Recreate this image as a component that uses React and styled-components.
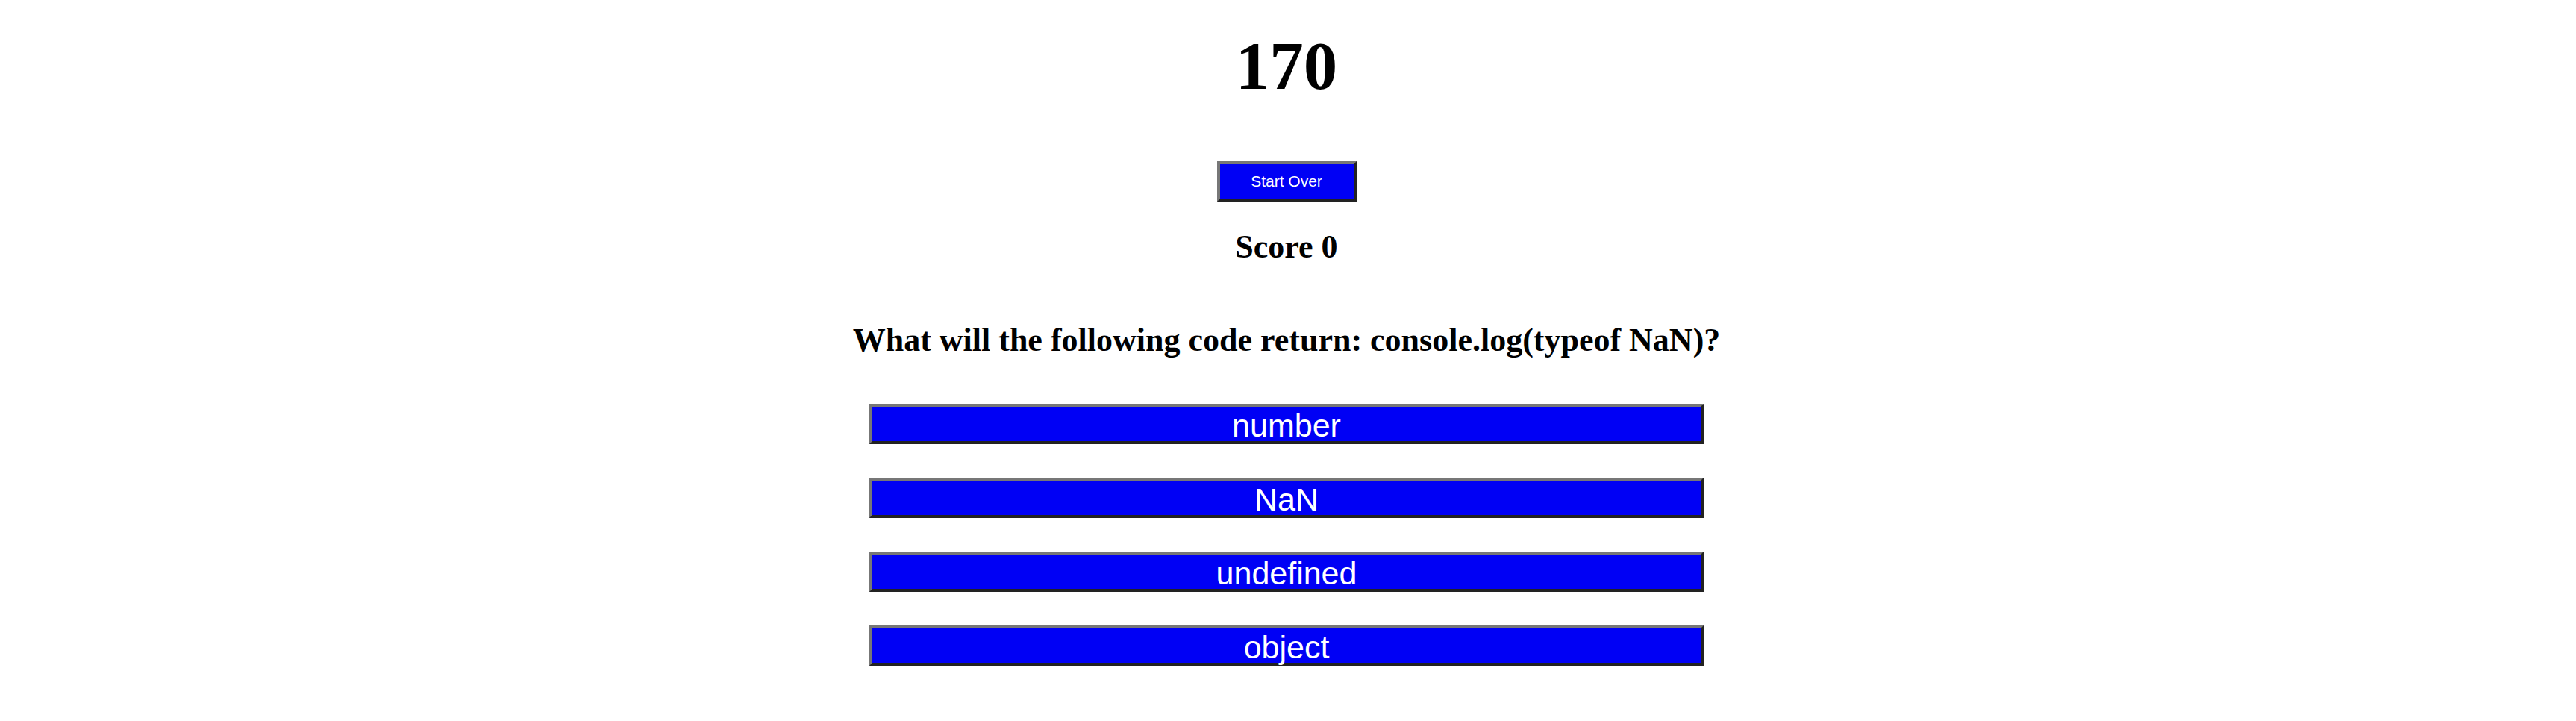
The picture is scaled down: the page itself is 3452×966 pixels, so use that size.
import React from "react";
import styled, { createGlobalStyle } from "styled-components";

const answers = ["number", "NaN", "undefined", "object"];

const App = () => {
    return <Page>
        <Global />
        <Timer>170</Timer>
        <StartButton>Start Over</StartButton>
        <Score>Score 0</Score>
        <Question>What will the following code return: console.log(typeof NaN)?</Question>
        <Answers>
            {answers.map((a) => (
                <AnswerButton key={a}>{a}</AnswerButton>
            ))}
        </Answers>
    </Page>
}

export default App

const Global = createGlobalStyle`
body{
    margin: 0;
    background: #ffffff;
    font-family: "Liberation Serif", "Times New Roman", serif;
    color: #000;
}
`

const Page = styled.div`
box-sizing: border-box;
display: flex;
flex-direction: column;
align-items: center;
width: 100%;
padding-right: 4px;
`

const Timer = styled.h1`
margin: 39px 0 0 0;
font-size: 91px;
line-height: 100px;
font-weight: bold;
`

const Bevel = styled.button`
box-sizing: border-box;
display: flex;
align-items: center;
justify-content: center;
background-color: #0000f5;
color: #ffffff;
font-family: "Liberation Sans", Arial, sans-serif;
border-style: solid;
border-width: 4px;
border-color: #777777 #222222 #222222 #777777;
border-radius: 0;
margin: 0;
cursor: pointer;
`

const StartButton = styled(Bevel)`
margin-top: 77px;
width: 187px;
height: 54px;
padding: 0;
font-size: 21px;
`

const Score = styled.h2`
margin: 36px 0 0 0;
font-size: 44px;
line-height: 50px;
font-weight: bold;
`

const Question = styled.h2`
margin: 75px 0 0 0;
font-size: 44px;
line-height: 50px;
font-weight: bold;
`

const Answers = styled.div`
display: flex;
flex-direction: column;
gap: 45px;
margin-top: 60px;
`

const AnswerButton = styled(Bevel)`
width: 1118px;
height: 54px;
padding: 5px 0 0 0;
font-size: 43px;
line-height: 43px;
`
